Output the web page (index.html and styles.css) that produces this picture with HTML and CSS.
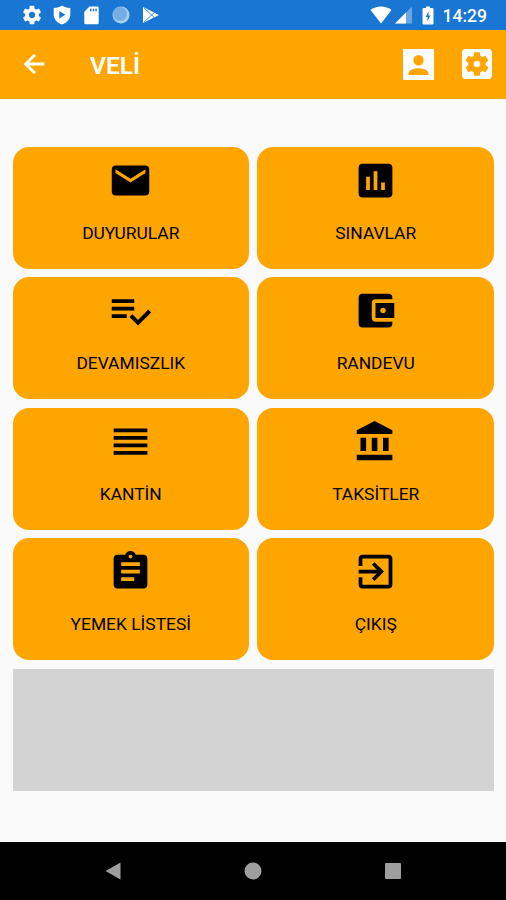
FILE: index.html
```html
<!DOCTYPE html>
<html lang="tr">
<head>
    <meta charset="UTF-8">
    <meta name="viewport" content="width=device-width, initial-scale=1.0">
    <title>Veli</title>
    <link rel="stylesheet" href="styles.css">
</head>
<body>
    <div class="screen">
        <div class="status-bar">
            <div class="status-left">
                <svg class="gear" viewBox="0 0 24 24"><path d="M19.43 12.98c.04-.32.07-.64.07-.98s-.03-.66-.07-.98l2.11-1.65c.19-.15.24-.42.12-.64l-2-3.46c-.12-.22-.39-.3-.61-.22l-2.49 1c-.52-.4-1.08-.73-1.69-.98l-.38-2.65C14.46 2.18 14.25 2 14 2h-4c-.25 0-.46.18-.49.42l-.38 2.65c-.61.25-1.17.59-1.69.98l-2.49-1c-.23-.09-.49 0-.61.22l-2 3.46c-.13.22-.07.49.12.64l2.11 1.65c-.04.32-.07.65-.07.98s.03.66.07.98l-2.11 1.65c-.19.15-.24.42-.12.64l2 3.46c.12.22.39.3.61.22l2.49-1c.52.4 1.08.73 1.69.98l.38 2.65c.03.24.24.42.49.42h4c.25 0 .46-.18.49-.42l.38-2.65c.61-.25 1.17-.59 1.69-.98l2.49 1c.23.09.49 0 .61-.22l2-3.46c.12-.22.07-.49-.12-.64l-2.11-1.65zM12 15.5c-1.93 0-3.500-1.570-3.500-3.500s1.570-3.500 3.500-3.500 3.500 1.570 3.500 3.500-1.570 3.500-3.500 3.500z"/></svg>
                <svg class="shield" viewBox="0 0 18 20"><path fill-rule="evenodd" d="M9 .5C7 2 4 3 .7 3v6.500c0 4.700 3.500 8.500 8.300 10 4.800-1.500 8.300-5.300 8.300-10V3C14 3 11 2 9 .5zM6.300 6v7.600l6-3.800z"/></svg>
                <svg class="sd" viewBox="0 0 15 19"><path fill-rule="evenodd" d="M5.500.5h7.700c1 0 1.500.6 1.500 1.500v14.700c0 1-.6 1.600-1.500 1.600H1.800c-1 0-1.500-.6-1.500-1.600V5.700zM6 2.800v2.400h1.500V2.800zm2.700 0v2.400h1.500V2.800zm2.600 0v2.400h1.500V2.800z"/></svg>
                <svg class="sync" viewBox="0 0 18 18"><circle cx="9" cy="9" r="8.500" fill="#a9ceef"/><circle cx="8" cy="8" r="7" fill="#73ade4"/></svg>
                <svg class="play" viewBox="0 0 18 18"><path d="M1 1v16l16-8z"/><path d="M2 2l10.500 9.500M2 16L12.500 6.500" stroke="#1976d2" stroke-width=".8"/></svg>
            </div>
            <div class="status-right">
                <svg class="wifi" viewBox="0 0 22 18"><path d="M.5 4C6-.8 16-.8 21.500 4L11 17.500z"/></svg>
                <svg class="signal" viewBox="0 0 18 18"><path d="M0 17.500L17 .5v17z" fill="#6ba6e0"/><path d="M0 17.500L11 6.500v11z"/></svg>
                <svg class="battery" viewBox="0 0 12 19"><path fill-rule="evenodd" d="M4 .5h4V2h2.200c.7 0 1.300.6 1.300 1.300v13.900c0 .7-.6 1.300-1.300 1.300H1.800c-.7 0-1.300-.6-1.300-1.300V3.300C.5 2.600 1.100 2 1.800 2H4zM6.500 5.500L3.600 11h1.900v4.200L8.400 9.500H6.500z"/></svg>
                <span class="time">14:29</span>
            </div>
        </div>

        <div class="toolbar">
            <svg class="back" viewBox="0 0 24 24"><path d="M20 11H7.830l5.590-5.590L12 4l-8 8 8 8 1.410-1.410L7.830 13H20v-2z"/></svg>
            <h1 class="title">VELİ</h1>
            <svg class="person" viewBox="0 0 31 31"><path fill-rule="evenodd" d="M0 0h31v31H0zM15.500 6a5.200 5.200 0 1 0 0 10.400a5.200 5.200 0 1 0 0-10.400zM5.500 26h20v-1.800c0-3-5.500-5-10-5s-10 2-10 5z"/></svg>
            <svg class="settings" viewBox="0 0 24 24"><path d="M12 10c-1.100 0-2 .9-2 2s.9 2 2 2 2-.9 2-2-.9-2-2-2zm7-7H5c-1.110 0-2 .9-2 2v14c0 1.100.89 2 2 2h14c1.110 0 2-.9 2-2V5c0-1.100-.89-2-2-2zm-1.750 9c0 .23-.02.46-.05.68l1.480 1.160c.13.11.17.3.08.45l-1.400 2.420c-.09.15-.27.21-.43.15l-1.740-.7c-.36.28-.76.51-1.180.69l-.26 1.850c-.03.17-.18.3-.35.3h-2.800c-.17 0-.32-.13-.35-.29l-.26-1.850c-.43-.18-.82-.41-1.180-.69l-1.740.7c-.16.06-.34 0-.43-.15l-1.400-2.420c-.09-.15-.05-.34.08-.45l1.480-1.160c-.03-.23-.05-.46-.05-.69 0-.23.02-.46.05-.68l-1.480-1.160c-.13-.11-.17-.3-.08-.45l1.400-2.420c.09-.15.27-.21.43-.15l1.740.7c.36-.28.76-.51 1.180-.69l.26-1.850c.03-.17.18-.3.35-.3h2.800c.17 0 .32.13.35.29l.26 1.850c.43.18.82.41 1.180.69l1.740-.7c.16-.06.34 0 .43.15l1.400 2.420c.09.15.05.34-.08.45l-1.480 1.160c.03.23.05.46.05.69z"/></svg>
        </div>

        <div class="menu">
            <button class="card">
                <svg viewBox="0 0 24 24"><path d="M20 4H4c-1.100 0-1.990.9-1.990 2L2 18c0 1.100.9 2 2 2h16c1.100 0 2-.9 2-2V6c0-1.100-.9-2-2-2zm0 4l-8 5-8-5V6l8 5 8-5v2z"/></svg>
                <span>DUYURULAR</span>
            </button>
            <button class="card">
                <svg viewBox="0 0 24 24"><path d="M19 3H5c-1.100 0-2 .9-2 2v14c0 1.100.9 2 2 2h14c1.100 0 2-.9 2-2V5c0-1.100-.9-2-2-2zM9 17H7v-7h2v7zm4 0h-2V7h2v10zm4 0h-2v-4h2v4z"/></svg>
                <span>SINAVLAR</span>
            </button>
            <button class="card">
                <svg viewBox="0 0 24 24"><path d="M14 10H2v2h12v-2zm0-4H2v2h12V6zM2 16h8v-2H2v2zm19.500-4.500L23 13l-6.990 7-4.510-4.500L13 14l3.010 3 5.490-5.500z"/></svg>
                <span>DEVAMISZLIK</span>
            </button>
            <button class="card">
                <svg viewBox="0 0 24 24"><path d="M21 18v1c0 1.100-.9 2-2 2H5c-1.110 0-2-.9-2-2V5c0-1.100.89-2 2-2h14c1.100 0 2 .9 2 2v1h-9c-1.110 0-2 .9-2 2v8c0 1.100.89 2 2 2h9zm-9-2h10V8H12v8zm4-2.500c-.83 0-1.500-.67-1.500-1.500s.67-1.500 1.500-1.500 1.500.67 1.500 1.500-.67 1.500-1.500 1.500z"/></svg>
                <span>RANDEVU</span>
            </button>
            <button class="card">
                <svg viewBox="0 0 24 24"><path d="M3 15h18v-2H3v2zm0 4h18v-2H3v2zm0-8h18V9H3v2zm0-6v2h18V5H3z"/></svg>
                <span>KANTİN</span>
            </button>
            <button class="card">
                <svg viewBox="0 0 24 24"><path d="M4 10v7h3v-7H4zm6 0v7h3v-7h-3zM2 22h19v-3H2v3zm14-12v7h3v-7h-3zm-4.500-9L2 6v2h19V6l-9.500-5z"/></svg>
                <span>TAKSİTLER</span>
            </button>
            <button class="card">
                <svg viewBox="0 0 24 24"><path d="M19 3h-4.180C14.400 1.840 13.300 1 12 1c-1.300 0-2.400.84-2.820 2H5c-1.100 0-2 .9-2 2v14c0 1.100.9 2 2 2h14c1.100 0 2-.9 2-2V5c0-1.100-.9-2-2-2zm-7 0c.55 0 1 .45 1 1s-.45 1-1 1-1-.45-1-1 .45-1 1-1zm2 14H7v-2h7v2zm3-4H7v-2h10v2zm0-4H7V7h10v2z"/></svg>
                <span>YEMEK LİSTESİ</span>
            </button>
            <button class="card">
                <svg viewBox="0 0 24 24"><path d="M10.090 15.590L11.500 17l5-5-5-5-1.410 1.410L12.670 11H3v2h9.670l-2.580 2.590zM19 3H5c-1.110 0-2 .9-2 2v4h2V5h14v14H5v-4H3v4c0 1.100.89 2 2 2h14c1.100 0 2-.9 2-2V5c0-1.100-.9-2-2-2z"/></svg>
                <span>ÇIKIŞ</span>
            </button>
            <div class="banner"></div>
        </div>

        <div class="nav-bar">
            <svg viewBox="0 0 18 18"><path d="M1.500 9L16.500 .5v17z"/></svg>
            <svg viewBox="0 0 18 18"><circle cx="9" cy="9" r="8.500"/></svg>
            <svg viewBox="0 0 18 18"><rect x="1" y="1" width="16" height="16" rx="1"/></svg>
        </div>
    </div>
</body>
</html>
```

FILE: styles.css
```css
* {
    box-sizing: border-box;
}

body {
    margin: 0;
    font-family: Roboto, "Noto Sans", sans-serif;
}

svg {
    display: block;
    flex: none;
    fill: currentColor;
}

.screen {
    display: flex;
    flex-direction: column;
    height: 900px;
    background-color: #fafafa;
}

.status-bar {
    display: flex;
    justify-content: space-between;
    height: 30px;
    padding: 0 19px 0 21px;
    background-color: #1976d2;
    color: white;
}

.status-left,
.status-right {
    display: flex;
    align-items: center;
}

.gear {
    width: 22px;
    height: 22px;
}

.shield {
    width: 18px;
    height: 20px;
    margin-left: 10px;
}

.sd {
    width: 15px;
    height: 19px;
    margin-left: 13px;
}

.sync {
    width: 18px;
    height: 18px;
    margin-left: 13px;
}

.play {
    width: 18px;
    height: 18px;
    margin-left: 12px;
}

.wifi {
    width: 22px;
    height: 18px;
}

.signal {
    width: 18px;
    height: 18px;
    margin-left: 3px;
}

.battery {
    width: 12px;
    height: 19px;
    margin-left: 9px;
}

.time {
    margin-left: 9px;
    padding-top: 2px;
    font-size: 17.5px;
    font-weight: 500;
}

.toolbar {
    display: flex;
    align-items: center;
    height: 69px;
    padding: 0 9px 1px 19px;
    background-color: #ffa500;
    color: white;
}

.back {
    width: 30px;
    height: 30px;
    stroke: white;
    stroke-width: 0.4;
}

.title {
    flex: 1;
    margin: 3px 0 0 41px;
    font-size: 24.5px;
    font-weight: 600;
}

.person {
    width: 31px;
    height: 31px;
}

.settings {
    width: 40px;
    height: 40px;
    margin-left: 23px;
}

.menu {
    display: grid;
    grid-template-columns: 1fr 1fr;
    grid-auto-rows: 122px;
    gap: 8.4px;
    padding: 48px 12px 0 12.5px;
    flex: 1;
    align-content: start;
}

.card {
    display: flex;
    flex-direction: column;
    align-items: center;
    padding: 11px 0 0;
    border: none;
    border-radius: 16px;
    background-color: #ffa500;
    color: black;
    font-family: inherit;
    font-size: 17.4px;
    line-height: 20px;
    cursor: pointer;
}

.card svg {
    width: 45px;
    height: 45px;
    margin-bottom: 20px;
}

.banner {
    grid-column: 1 / 3;
    background-color: #d3d3d3;
}

.nav-bar {
    display: flex;
    justify-content: center;
    align-items: center;
    gap: 122px;
    height: 58px;
    background-color: black;
    color: #9e9e9e;
}

.nav-bar svg {
    width: 18px;
    height: 18px;
}
```
